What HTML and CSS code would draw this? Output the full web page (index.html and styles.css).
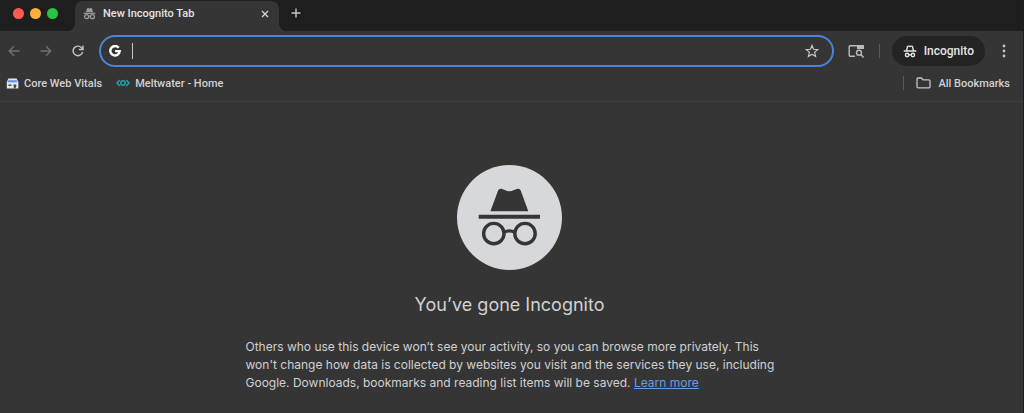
FILE: index.html
```html
<!DOCTYPE html>
<html lang="en">

<head>
    <meta charset="utf-8">
    <meta name="viewport" content="width=device-width, initial-scale=1.0">
    <title>New Incognito Tab</title>
    <link rel="stylesheet" href="styles.css">
</head>

<body>
    <!-- tab strip -->
    <header class="tab-strip">
        <div class="lights">
            <span class="light red"></span>
            <span class="light yellow"></span>
            <span class="light green"></span>
        </div>
        <div class="tab">
            <svg class="tab-icon" width="13" height="13" viewBox="0 0 13 13">
                <path d="M3 5 4 1.6Q4.3.8 5.2 1.1L6.5 1.5 7.8 1.1Q8.7.8 9 1.6L10 5z" fill="#9a9b9d" />
                <path d="M.8 6.3h11.4" stroke="#9a9b9d" stroke-width="1.3" />
                <g fill="none" stroke="#9a9b9d" stroke-width="1.3">
                    <circle cx="3.6" cy="9.7" r="2" />
                    <circle cx="9.4" cy="9.7" r="2" />
                    <path d="M5.6 9.5Q6.5 8.9 7.4 9.5" />
                </g>
            </svg>
            <span class="tab-title">New Incognito Tab</span>
            <button class="icon-btn tab-close" aria-label="Close tab">
                <svg width="8" height="8" viewBox="0 0 8 8"><path d="M1 1l6 6M7 1L1 7" stroke="#d5d6d8" stroke-width="1.4" /></svg>
            </button>
        </div>
        <button class="icon-btn new-tab" aria-label="New tab">
            <svg width="10" height="10" viewBox="0 0 10 10"><path d="M5 .5v9M.5 5h9" stroke="#c4c5c7" stroke-width="1.4" /></svg>
        </button>
    </header>

    <!-- toolbar -->
    <div class="toolbar">
        <nav class="nav-buttons">
            <button class="icon-btn" aria-label="Back">
                <svg width="12" height="12" viewBox="0 0 12 12" fill="none" stroke="#6f7072" stroke-width="1.4"><path d="M11.5 6H1.5M6 1.2 1.2 6 6 10.8" /></svg>
            </button>
            <button class="icon-btn" aria-label="Forward">
                <svg width="12" height="12" viewBox="0 0 12 12" fill="none" stroke="#6f7072" stroke-width="1.4"><path d="M.5 6h10M6 1.2 10.8 6 6 10.8" /></svg>
            </button>
            <button class="icon-btn" aria-label="Reload">
                <svg width="12" height="12" viewBox="0 0 12 12" fill="none" stroke="#c4c5c7" stroke-width="1.4"><path d="M10.6 7A4.8 4.8 0 1 1 9.6 2.8L10.8 4.2M11 .4v4.1H6.9" /></svg>
            </button>
        </nav>

        <div class="omnibox">
            <svg width="12" height="12" viewBox="0 0 12 12" fill="none" stroke="#fff" stroke-width="2.4"><path d="M9.7 2.8A4.7 4.7 0 1 0 10.7 6.1H6.1" /></svg>
            <span class="caret"></span>
            <input class="address" type="text" aria-label="Address and search bar">
            <button class="icon-btn" aria-label="Bookmark this tab">
                <svg width="14" height="14" viewBox="0 0 14 14" fill="none" stroke="#c4c5c7" stroke-width="1.2"><path d="M7 1.4 8.6 5.3 12.8 5.6 9.6 8.3 10.6 12.4 7 10.2 3.4 12.4 4.4 8.3 1.2 5.6 5.4 5.3z" /></svg>
            </button>
        </div>

        <button class="icon-btn tab-search" aria-label="Search tabs">
            <svg width="17" height="14" viewBox="0 0 17 14" fill="none" stroke="#b9babc" stroke-width="1.4">
                <path d="M7 12.3H2.2Q1.2 12.3 1.2 11.3V2.7Q1.2 1.7 2.2 1.7H14.8Q15.3 1.7 15.3 2.4V5" />
                <path d="M9 1h6q1 0 1 1v3H9z" fill="#b9babc" stroke="none" />
                <circle cx="11" cy="8.8" r="2.5" />
                <path d="M12.8 10.6 15.6 13.4" />
            </svg>
        </button>
        <span class="divider"></span>
        <button class="profile">
            <svg width="14" height="13" viewBox="0 0 14 13" fill="none" stroke="#e3e3e3" stroke-width="1.4">
                <path d="M3.6 5.5 4.5 1.6Q4.7 1 5.4 1.1L7 1.5 8.6 1.1Q9.3 1 9.5 1.6L10.4 5.5M.7 6h12.6" />
                <circle cx="4.1" cy="10" r="1.7" />
                <circle cx="9.9" cy="10" r="1.7" />
                <path d="M5.8 9.8h2.4" />
            </svg>
            Incognito
        </button>
        <button class="icon-btn menu" aria-label="Menu">
            <svg width="4" height="14" viewBox="0 0 4 14" fill="#c4c5c7"><circle cx="2" cy="2" r="1.4" /><circle cx="2" cy="7" r="1.4" /><circle cx="2" cy="12" r="1.4" /></svg>
        </button>
    </div>

    <!-- bookmarks bar -->
    <nav class="bookmarks">
        <a class="bookmark" href="#">
            <svg width="13" height="12" viewBox="0 0 13 12">
                <path d="M2.4 1.6h8.2L12.4 5V11.5H.8V5z" fill="#e4e6ea" />
                <path d="M2.4 3.2h8.2L11.4 5.2H1.6z" fill="#5b8fe8" />
                <path d="M2.4 7.6h3v1.4h-3zM7.4 7.6h2.8v1.8L9.2 11.5H8z" fill="#44484f" />
            </svg>
            Core Web Vitals
        </a>
        <a class="bookmark" href="#">
            <svg width="14" height="8" viewBox="0 0 14 8" fill="none" stroke="#1fa5a4" stroke-width="1.5">
                <path d="M3.8 1 1 4l2.8 3M10.2 1 13 4l-2.8 3" />
                <circle cx="7" cy="4" r="2.2" />
            </svg>
            Meltwater - Home
        </a>
        <span class="divider bookmarks-divider"></span>
        <a class="bookmark" href="#">
            <svg width="15" height="12" viewBox="0 0 15 12" fill="none" stroke="#c4c5c7" stroke-width="1.3"><path d="M1 9.8V2Q1 1 2 1H5.4L7 2.8H13Q14 2.8 14 3.8V9.8Q14 10.8 13 10.8H2Q1 10.8 1 9.8z" /></svg>
            All Bookmarks
        </a>
    </nav>

    <!-- page -->
    <main class="page">
        <svg class="hero" width="105" height="105" viewBox="0 0 105 105">
            <circle cx="52.5" cy="52.5" r="52.5" fill="#d7d8dc" />
            <g fill="#353535">
                <path d="M33.4 46.3 41.2 25.3Q42 23.3 44.2 23.7C47.5 24.3 49 26.2 52.4 26.2S57.3 24.3 60.6 23.7Q62.8 23.3 63.6 25.3L71.3 46.3z" />
                <path d="M21.7 49.7h61.3v4H21.7z" />
            </g>
            <g fill="none" stroke="#353535" stroke-width="3.4">
                <circle cx="36.8" cy="68.6" r="10.2" />
                <circle cx="68" cy="68.6" r="10.2" />
                <path d="M46.6 67.4Q52.4 64.4 58.2 67.4" />
            </g>
        </svg>
        <h1>You’ve gone Incognito</h1>
        <p>Others who use this device won’t see your activity, so you can browse more privately. This won't change how data is collected by websites you visit and the services they use, including Google. Downloads, bookmarks and reading list items will be saved. <a href="#">Learn more</a></p>
    </main>
</body>

</html>
```
FILE: styles.css
```css
* {
    box-sizing: border-box;
}

body {
    margin: 0;
    min-height: 100vh;
    background-color: #353535;
    border-right: 1px solid #1c1c1c;
    font-family: Roboto, "Liberation Sans", sans-serif;
    font-size: 11px;
    font-weight: 500;
    color: #d0d1d3;
}

svg {
    display: block;
    flex: none;
}

.icon-btn {
    display: flex;
    padding: 0;
    border: none;
    background: none;
}

/* tab strip */

.tab-strip {
    display: flex;
    height: 31px;
    background-color: #1e1e1e;
}

.lights {
    display: flex;
    align-items: center;
    gap: 6px;
    height: 26px;
    padding-left: 13px;
}

.light {
    width: 11px;
    height: 11px;
    border-radius: 50%;
}

.red {
    background-color: #ff5a52;
}

.yellow {
    background-color: #fcb13c;
}

.green {
    background-color: #29c440;
}

.tab {
    position: relative;
    display: flex;
    align-items: center;
    width: 204px;
    height: 30px;
    margin: 1px 0 0 17px;
    padding: 0 10px 5px 8px;
    border-radius: 8px 8px 0 0;
    background-color: #353535;
}

/* curved feet of the active tab */
.tab::before,
.tab::after {
    content: "";
    position: absolute;
    bottom: 0;
    width: 8px;
    height: 8px;
}

.tab::before {
    right: 100%;
    background: radial-gradient(circle at 0 0, #1e1e1e 8px, #353535 8px);
}

.tab::after {
    left: 100%;
    background: radial-gradient(circle at 100% 0, #1e1e1e 8px, #353535 8px);
}

.tab-title {
    flex: 1;
    margin-left: 7px;
    color: #e3e3e3;
}

.new-tab {
    align-self: flex-start;
    margin: 8px 0 0 12px;
}

/* toolbar */

.toolbar {
    display: flex;
    align-items: center;
    height: 40px;
    padding: 0 17px 0 8px;
}

.nav-buttons {
    display: flex;
    gap: 20px;
    margin-right: 15px;
}

.omnibox {
    display: flex;
    flex: 1;
    align-items: center;
    height: 32px;
    padding: 0 13px 0 8px;
    border: 2px solid #4f83db;
    border-radius: 16px;
}

.caret {
    width: 1px;
    height: 16px;
    margin-left: 11px;
    background-color: #c4c5c7;
}

.address {
    flex: 1;
    min-width: 0;
    padding: 0;
    border: none;
    outline: none;
    background: none;
    color: #e3e3e3;
    font: inherit;
}

.tab-search {
    margin-left: 14px;
}

.divider {
    width: 1px;
    height: 14px;
    margin: 0 12px 0 14px;
    background-color: #5a5a5a;
}

.profile {
    display: flex;
    align-items: center;
    gap: 7px;
    height: 30px;
    padding: 0 11px;
    border: none;
    border-radius: 15px;
    background-color: #232323;
    color: #e3e3e3;
    font: inherit;
    font-size: 12px;
}

.menu {
    margin-left: 17px;
}

/* bookmarks */

.bookmarks {
    display: flex;
    align-items: center;
    height: 31px;
    padding: 0 13px 6px 6px;
    border-bottom: 1px solid #3f3f3f;
}

.bookmark {
    display: flex;
    align-items: center;
    gap: 5px;
    margin-right: 14px;
    color: #d0d1d3;
    text-decoration: none;
}

.bookmark:last-child {
    gap: 7px;
    margin-right: 0;
}

.bookmarks-divider {
    margin-left: auto;
}

/* page */

.page {
    display: flex;
    flex-direction: column;
    align-items: center;
    padding: 63px 4px 20px 0;
    font-family: Inter, "Liberation Sans", sans-serif;
    font-weight: 400;
}

h1 {
    margin: 22px 0 20px;
    font-size: 18px;
    font-weight: 400;
    line-height: 26px;
}

p {
    width: 100%;
    max-width: 532px;
    margin: 0 0 0 4px;
    font-size: 12px;
    line-height: 18px;
}

p a {
    color: #6b9be8;
}
```
